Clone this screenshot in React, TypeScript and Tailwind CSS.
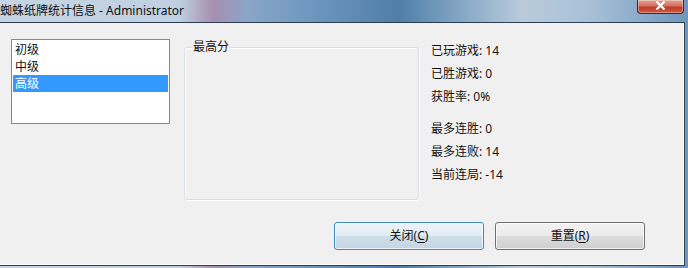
import React from "react";

const font = { fontFamily: '"Noto Sans", "Noto Sans CJK SC", sans-serif' };

export default function App() {
  const stats1 = ["已玩游戏: 14", "已胜游戏: 0", "获胜率: 0%"];
  const stats2 = ["最多连胜: 0", "最多连败: 14", "当前连局: -14"];
  return (
    <div
      className="w-[688px] h-[268px] overflow-hidden text-[12px] text-[#111] bg-[linear-gradient(90deg,#c6d5e3_0%,#bfd0e1_26%,#a88fb0_31%,#8aa6c8_36%,#6f97bf_45%,#4f7ea8_58%,#7fa3c2_66%,#b9cbdb_76%,#a7c0d7_86%,#6f96bd_100%)]"
      style={font}
    >
      {/* title bar */}
      <div className="h-[22px] flex items-start justify-between">
        <div className="h-[22px] flex items-center pl-0 leading-none whitespace-nowrap">
          蜘蛛纸牌统计信息 - Administrator
        </div>
        <div className="mr-[4px] w-[47px] h-[14px] rounded-b-[4px] border border-t-0 border-[#4a2622] bg-[linear-gradient(180deg,#e3a393_0%,#d3705f_45%,#c23b28_55%,#cf5a41_100%)] flex items-center justify-center shadow-[inset_0_0_0_1px_rgba(255,255,255,0.35)]">
          <svg width="11" height="9" viewBox="0 0 11 9" className="-mt-[2px]">
            <path d="M1.5 0.5 L9.5 8.5 M9.5 0.5 L1.5 8.5" stroke="#ffffff" strokeWidth="2.2" />
          </svg>
        </div>
      </div>

      {/* dialog body */}
      <div className="w-[685px] h-[244px] border-t border-r border-b border-[#2e3f52] bg-[#f0f0f0] shadow-[inset_-1px_-1px_0_#ffffff] flex flex-col">
        <div className="flex items-start pl-[11px] pt-[16px]">
          {/* list box */}
          <div className="w-[159px] h-[85px] border border-[#828790] bg-white p-[1px]">
            <div className="h-[17px] leading-[17px] pl-[2px]">初级</div>
            <div className="h-[17px] leading-[17px] pl-[2px]">中级</div>
            <div className="h-[17px] leading-[17px] pl-[2px] bg-[#3399ff] text-white">高级</div>
          </div>

          {/* group box */}
          <fieldset className="ml-[14px] mt-[1px] w-[235px] h-[160px] border border-[#d5dfe5] rounded-[3px] shadow-[inset_1px_1px_0_#ffffff,1px_1px_0_#ffffff]">
            <legend className="ml-[7px] px-[1px] leading-[14px]">最高分</legend>
          </fieldset>

          {/* stats */}
          <div className="ml-[12px] flex flex-col">
            {stats1.map((s) => (
              <div key={s} className="leading-[23px] whitespace-nowrap">{s}</div>
            ))}
            <div className="mt-[9px]" />
            {stats2.map((s) => (
              <div key={s} className="leading-[23px] whitespace-nowrap">{s}</div>
            ))}
          </div>
        </div>

        {/* buttons */}
        <div className="mt-[22px] flex justify-end gap-[11px] pr-[39px]">
          <button className="w-[150px] h-[28px] rounded-[3px] border border-[#3c8ac2] bg-[linear-gradient(180deg,#edf4f9_0%,#e2ecf3_50%,#cfdfea_51%,#c3d6e3_100%)] shadow-[inset_0_0_0_1px_rgba(255,255,255,0.7)] text-[12px] text-[#111] flex items-center justify-center">
            关闭(<span className="underline underline-offset-[2px]">C</span>)
          </button>
          <button className="w-[150px] h-[28px] rounded-[3px] border border-[#707070] bg-[linear-gradient(180deg,#f2f2f2_0%,#ebebeb_50%,#dddddd_51%,#cfcfcf_100%)] shadow-[inset_0_0_0_1px_rgba(255,255,255,0.7)] text-[12px] text-[#111] flex items-center justify-center">
            重置(<span className="underline underline-offset-[2px]">R</span>)
          </button>
        </div>
      </div>
    </div>
  );
}
